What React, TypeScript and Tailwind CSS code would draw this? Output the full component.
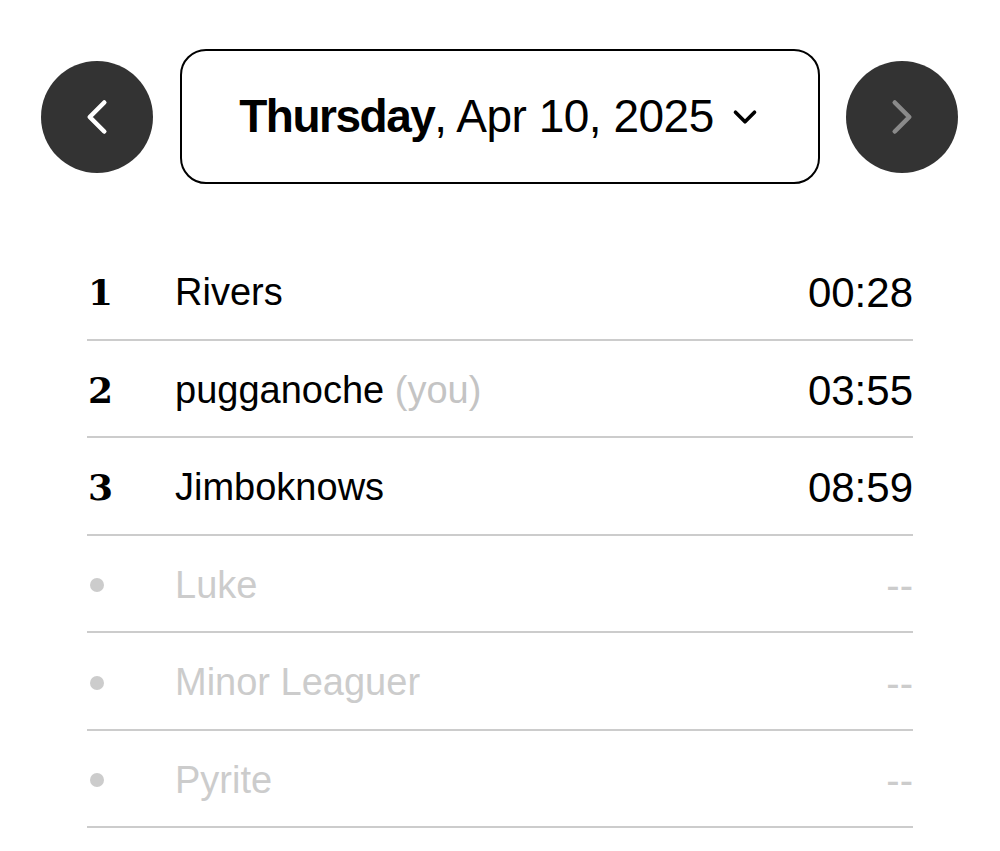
import { ChevronLeft, ChevronRight, ChevronDown } from 'lucide-react';

type Row = { rank: number | null; name: string; you?: boolean; time: string | null };

const rows: Row[] = [
  { rank: 1, name: 'Rivers', time: '00:28' },
  { rank: 2, name: 'pugganoche', you: true, time: '03:55' },
  { rank: 3, name: 'Jimboknows', time: '08:59' },
  { rank: null, name: 'Luke', time: null },
  { rank: null, name: 'Minor Leaguer', time: null },
  { rank: null, name: 'Pyrite', time: null },
];

const App = () => {
  return (
    <div className="min-h-screen bg-white font-['Liberation_Sans',Arial,sans-serif] text-black">
      <div className="flex items-center justify-between pl-[41px] pr-[42px] pt-[49px]">
        <button className="flex h-[112px] w-[112px] items-center justify-center rounded-full bg-[#333333]">
          <ChevronLeft className="h-[58px] w-[58px] text-white" strokeWidth={1.9} />
        </button>
        <button className="flex h-[135px] w-[640px] items-center justify-center gap-3 rounded-[26px] border-2 border-black bg-white pl-1">
          <span className="text-[46px] tracking-[-0.5px]">
            <span className="font-bold tracking-[-1.5px]">Thursday</span>, Apr 10, 2025
          </span>
          <ChevronDown className="h-[38px] w-[38px] text-black" strokeWidth={2.3} />
        </button>
        <button className="flex h-[112px] w-[112px] items-center justify-center rounded-full bg-[#333333]">
          <ChevronRight className="h-[58px] w-[58px] text-[#8a8a8a]" strokeWidth={1.9} />
        </button>
      </div>

      <div className="mx-[87px] mt-[59px]">
        {rows.map((r) => (
          <div
            key={r.name}
            className="flex h-[97.5px] items-center border-b-2 border-[#cccccc] pt-[4px] text-[38px]"
          >
            <div className="w-[88px] pl-[1px]">
              {r.rank !== null ? (
                <span className="font-['DejaVu_Serif',serif] text-[36px] font-black">{r.rank}</span>
              ) : (
                <span className="ml-[2px] block h-[14px] w-[14px] rounded-full bg-[#cccccc]" />
              )}
            </div>
            <div className={`flex-1 ${r.rank !== null ? 'text-black' : 'text-[#cccccc]'}`}>
              {r.name}
              {r.you && <span className="text-[#c4c4c4]"> (you)</span>}
            </div>
            <div className={r.time ? 'text-[42px] text-black' : 'text-[40px] text-[#cccccc]'}>
              {r.time ?? '--'}
            </div>
          </div>
        ))}
      </div>
    </div>
  );
};

export default App;
